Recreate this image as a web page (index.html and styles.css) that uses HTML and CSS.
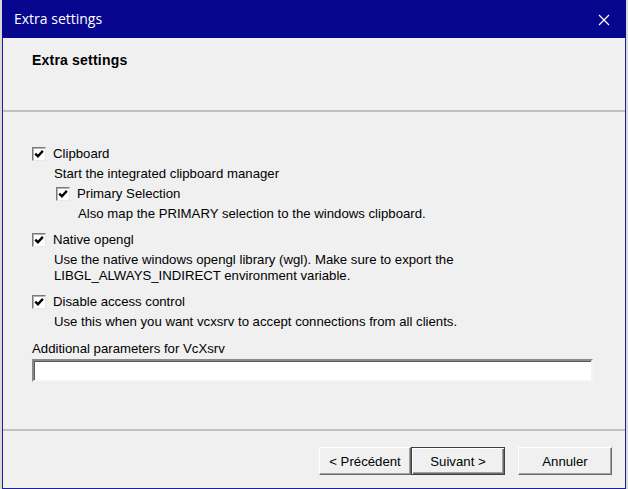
FILE: index.html
```html
<!DOCTYPE html>
<html lang="en">
  <head>
    <meta charset="UTF-8" />
    <title>Extra settings</title>
    <link rel="stylesheet" href="styles.css">
  </head>
  <body>
    <div class="window">
      <div class="titlebar">
        <span class="title">Extra settings</span>
        <svg class="close" width="12" height="12" viewBox="0 0 12 12">
          <path d="M1 1 L11 11 M11 1 L1 11" stroke="#fff" stroke-width="1.2" fill="none" />
        </svg>
      </div>

      <div class="header">
        <h1>Extra settings</h1>
      </div>

      <div class="content">
        <div class="option">
          <div class="check-row">
            <span class="box"><svg width="10" height="10" viewBox="0 0 10 10"><path d="M1.3 4.6 L3.9 7.3 L8.9 1.9" stroke="#000" stroke-width="2.4" fill="none" /></svg></span>
            <span>Clipboard</span>
          </div>
          <p class="desc">Start the integrated clipboard manager</p>

          <div class="option sub">
            <div class="check-row">
              <span class="box"><svg width="10" height="10" viewBox="0 0 10 10"><path d="M1.3 4.6 L3.9 7.3 L8.9 1.9" stroke="#000" stroke-width="2.4" fill="none" /></svg></span>
              <span>Primary Selection</span>
            </div>
            <p class="desc">Also map the PRIMARY selection to the windows clipboard.</p>
          </div>
        </div>

        <div class="option">
          <div class="check-row">
            <span class="box"><svg width="10" height="10" viewBox="0 0 10 10"><path d="M1.3 4.6 L3.9 7.3 L8.9 1.9" stroke="#000" stroke-width="2.4" fill="none" /></svg></span>
            <span>Native opengl</span>
          </div>
          <p class="desc">Use the native windows opengl library (wgl). Make sure to export the<br>LIBGL_ALWAYS_INDIRECT environment variable.</p>
        </div>

        <div class="option">
          <div class="check-row">
            <span class="box"><svg width="10" height="10" viewBox="0 0 10 10"><path d="M1.3 4.6 L3.9 7.3 L8.9 1.9" stroke="#000" stroke-width="2.4" fill="none" /></svg></span>
            <span>Disable access control</span>
          </div>
          <p class="desc">Use this when you want vcxsrv to accept connections from all clients.</p>
        </div>

        <div class="field-label">Additional parameters for VcXsrv</div>
        <div class="textbox"></div>
      </div>

      <div class="footer">
        <button class="btn back">&lt; Précédent</button>
        <button class="btn default">Suivant &gt;</button>
        <button class="btn cancel">Annuler</button>
      </div>
    </div>
  </body>
</html>
```

FILE: styles.css
```css
body {
  margin: 0;
  background-color: #d9d9d9;
  font-family: "Liberation Sans", Arial, sans-serif;
  font-size: 13.2px;
  color: #000;
}

.window {
  margin-left: 2px;
  width: 622px;
  height: 488px;
  background-color: #f0f0f0;
  border: 1px solid #1f1f98;
  border-top: none;
  display: flex;
  flex-direction: column;
}

.titlebar {
  height: 38px;
  margin: 0 -1px;
  background-color: #06068f;
  color: white;
  display: flex;
  align-items: center;
  justify-content: space-between;
  padding: 0 16px 0 12px;
}

.title {
  font-family: "Open Sans", sans-serif;
  font-size: 14px;
  margin-top: -1px;
}

.close {
  margin-top: 1px;
}

.header {
  height: 74px;
  border-bottom: 2px solid #c0c0c0;
  padding-left: 29px;
  box-sizing: border-box;
}

.header h1 {
  margin: 0;
  padding-top: 14px;
  font-size: 14px;
  line-height: 16px;
  letter-spacing: 0.2px;
  font-weight: bold;
}

.content {
  height: 319px;
  padding: 24px 0 0 29px;
  box-sizing: border-box;
  border-bottom: 2px solid #c0c0c0;
}

.option {
  margin-top: 10px;
}

.option.sub {
  margin-top: 4px;
  margin-left: 24px;
}

.check-row {
  display: flex;
  align-items: center;
  gap: 7px;
  line-height: 16px;
}

.box {
  width: 12px;
  height: 12px;
  background-color: #fff;
  border: 1px solid;
  border-color: #7a7a7a #e8e8e8 #e8e8e8 #7a7a7a;
  box-shadow: inset 1px 1px #b4b4b4;
  display: flex;
  align-items: center;
  justify-content: center;
}

.desc {
  margin: 4px 0 0 22px;
  line-height: 16px;
}

.field-label {
  margin-top: 11px;
  line-height: 16px;
}

.textbox {
  margin-top: 2px;
  width: 557px;
  height: 19px;
  background-color: #fff;
  border: 2px solid;
  border-color: #8a8a8a #f4f4f4 #f4f4f4 #8a8a8a;
  box-shadow: inset 1px 1px #5a5a5a;
}

.footer {
  flex: 1;
  display: flex;
  justify-content: flex-end;
  align-items: flex-start;
  padding: 16px 13px 0 0;
}

.btn {
  font-family: inherit;
  font-size: 13.2px;
  height: 28px;
  width: 94px;
  background-color: #f0f0f0;
  border: 1px solid;
  border-color: #fff #6a6a6a #6a6a6a #fff;
  box-shadow: inset -1px -1px #a0a0a0;
  padding: 0;
}

.btn.back {
  width: 92px;
}

.btn.default {
  border: 1px solid #404040;
  box-shadow: inset 1px 1px #fff, inset -1px -1px #6a6a6a, inset -2px -2px #a0a0a0;
}

.btn.cancel {
  margin-left: 13px;
}
```
